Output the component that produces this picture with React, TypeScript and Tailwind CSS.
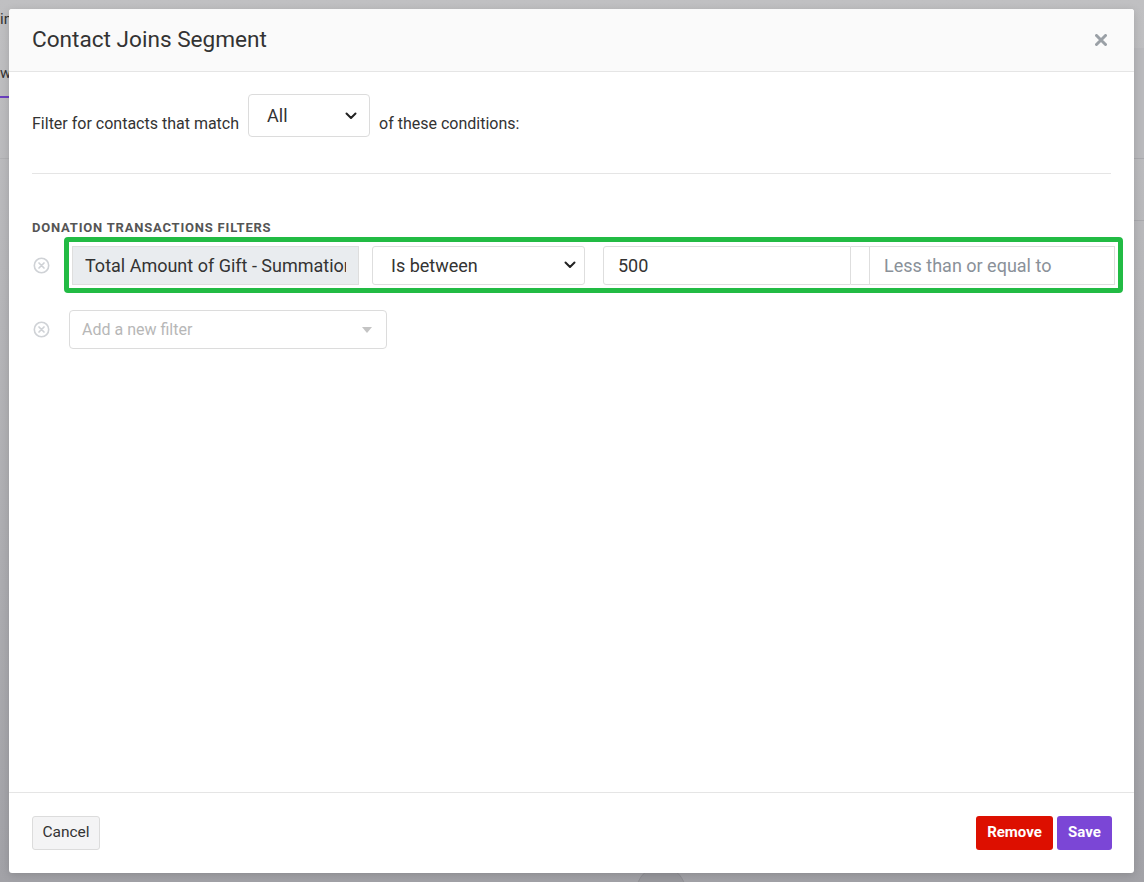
import React from "react";

function CircleX() {
  return (
    <svg width="17" height="17" viewBox="0 0 17 17" className="shrink-0">
      <circle cx="8.5" cy="8.5" r="7.2" fill="none" stroke="#cfd2d6" strokeWidth="1.6" />
      <path d="M6 6 L11 11 M11 6 L6 11" stroke="#cfd2d6" strokeWidth="1.7" strokeLinecap="round" />
    </svg>
  );
}

function Chevron() {
  return (
    <svg width="12" height="8" viewBox="0 0 12 8">
      <path d="M1.5 1.5 L6 6 L10.5 1.5" fill="none" stroke="#222" strokeWidth="2" strokeLinecap="round" strokeLinejoin="round" />
    </svg>
  );
}

export default function App() {
  return (
    <div
      className="relative w-[1144px] h-[882px] overflow-hidden bg-gradient-to-b from-[#c0c0c2] to-[#a2a2a7]"
      style={{ fontFamily: "Roboto, 'Liberation Sans', sans-serif" }}
    >
      {/* faint background page */}
      <div className="absolute left-0 top-[12px] text-[15px] text-[#333] leading-none">in</div>
      <div className="absolute left-0 top-[66px] text-[15px] text-[#333] leading-none">w</div>
      <div className="absolute left-0 top-[96px] w-[9px] h-[2px] bg-[#6b3fbf]" />
      <div className="absolute left-0 top-[158px] w-[9px] h-px bg-[#b0b0b3]" />
      <div className="absolute right-0 top-[48px] w-[10px] h-[110px] bg-[#b9b9bc]" />
      <div className="absolute right-0 top-[158px] w-[10px] h-px bg-[#a9a9ad]" />
      <div className="absolute right-0 top-[220px] w-[10px] h-px bg-[#a9a9ad]" />
      <div className="absolute left-[636px] top-[866px] w-[50px] h-[50px] rounded-full bg-[#98989d] border border-[#8e8e93]" />

      {/* modal */}
      <div className="absolute left-[9px] top-[9px] w-[1125px] h-[864px] bg-white rounded-[3px] shadow-[0_2px_8px_rgba(0,0,0,0.15)] flex flex-col">
        <div className="h-[63px] bg-[#fafafa] border-b border-[#e5e5e5] rounded-t-[3px] flex items-center justify-between pl-[23px] pr-[27px] shrink-0">
          <div className="text-[22.6px] text-[#333] font-normal">Contact Joins Segment</div>
          <svg width="12" height="12" viewBox="0 0 12 12">
            <path d="M1.5 1.5 L10.5 10.5 M10.5 1.5 L1.5 10.5" stroke="#9aa0a6" strokeWidth="3" strokeLinecap="round" />
          </svg>
        </div>

        <div className="flex-1 px-[23px]">
          <div className="flex items-end h-[43px] mt-[22px] text-[16px] text-[#333]">
            <span className="mb-[1px] leading-[24px]">Filter for contacts that match</span>
            <div className="ml-[9px] w-[122px] h-[43px] border border-[#dcdcdc] rounded-[4px] flex items-center justify-between pl-[18px] pr-[12px] shrink-0">
              <span className="text-[18px] text-[#333] -mt-[1px]">All</span>
              <Chevron />
            </div>
            <span className="ml-[9px] mb-[1px] leading-[24px]">of these conditions:</span>
          </div>
          <div className="mt-[36px] h-px bg-[#e5e5e5]" />

          <div className="mt-[47px] text-[13px] font-bold text-[#555] tracking-[0.8px] leading-none">
            DONATION TRANSACTIONS FILTERS
          </div>

          <div className="flex items-center mt-[3px]">
            <div className="w-[32px] flex justify-start pl-[1px] shrink-0">
              <CircleX />
            </div>
            <div className="shrink-0 w-[1059px] h-[56px] border-[5px] border-[#22bb44] rounded-[4px] flex items-center pl-[3px] pr-[3px]">
              <div className="shrink-0 w-[287px] h-[39px] bg-[#e9ecef] border border-[#dedede] flex items-center pl-[12px] pr-[12px] text-[18px] text-[#333]">
                <div className="flex-1 overflow-hidden whitespace-nowrap">Total Amount of Gift - Summation</div>
              </div>
              <div className="shrink-0 ml-[13px] w-[213px] h-[39px] border border-[#dedede] rounded-[3px] flex items-center justify-between pl-[18px] pr-[8px] text-[18px] text-[#333]">
                <span>Is between</span>
                <Chevron />
              </div>
              <div className="shrink-0 ml-[18px] w-[248px] h-[39px] border border-[#dedede] rounded-l-[3px] flex items-center pl-[14px] text-[18px] text-[#333]">
                500
              </div>
              <div className="shrink-0 w-[18px] h-[39px] border-y border-[#dedede]" />
              <div className="flex-1 h-[39px] border border-[#dedede] flex items-center pl-[14px] text-[18px] text-[#8a9199]">
                Less than or equal to
              </div>
            </div>
          </div>

          <div className="flex items-center mt-[17px]">
            <div className="w-[37px] flex justify-start pl-[1px] shrink-0">
              <CircleX />
            </div>
            <div className="w-[318px] h-[39px] border border-[#dcdcdc] rounded-[4px] flex items-center justify-between pl-[12px] pr-[14px] text-[16px] text-[#b7b7b7]">
              <span>Add a new filter</span>
              <svg width="10" height="6" viewBox="0 0 10 6">
                <path d="M0 0 L10 0 L5 6 Z" fill="#c4c4c4" />
              </svg>
            </div>
          </div>
        </div>

        <div className="h-[81px] border-t border-[#e5e5e5] flex items-center justify-between pl-[23px] pr-[22px] shrink-0">
          <button className="h-[34px] w-[68px] bg-[#f4f4f5] border border-[#dcdcdc] rounded-[3px] text-[15.5px] text-[#333] -mt-[1px]">
            Cancel
          </button>
          <div className="flex gap-[4px] -mt-[1px]">
            <button className="h-[34px] w-[77px] bg-[#dd0f00] rounded-[3px] text-[15px] font-bold text-white">
              Remove
            </button>
            <button className="h-[34px] w-[55px] bg-[#7b46d6] rounded-[3px] text-[15px] font-bold text-white">
              Save
            </button>
          </div>
        </div>
      </div>
    </div>
  );
}
